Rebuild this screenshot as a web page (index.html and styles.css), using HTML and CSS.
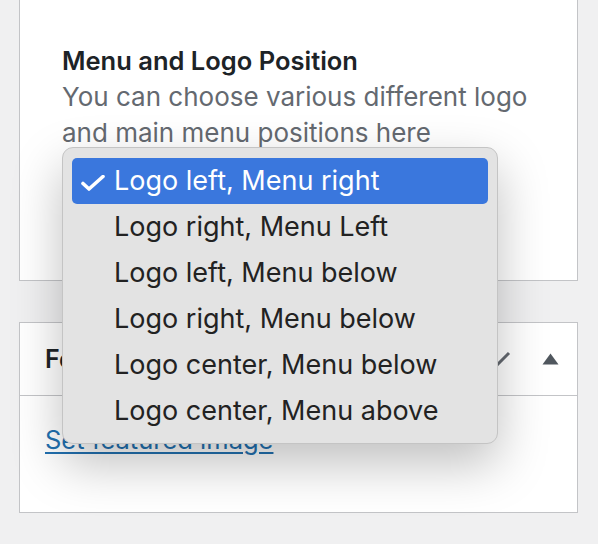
FILE: index.html
```html
<!DOCTYPE html>
<html lang="en">
<head>
	<meta charset="UTF-8">
	<title>Menu and Logo Position</title>
	<link rel="stylesheet" href="styles.css">
</head>
<body>
	<div class="panel panel-top">
		<div class="field">
			<h3 class="field-title">Menu and Logo Position</h3>
			<p class="field-desc">You can choose various different logo and main menu positions here</p>
			<div class="select-box"></div>
		</div>
	</div>

	<div class="panel panel-image">
		<div class="panel-head">
			<h2 class="panel-title">Featured image</h2>
			<div class="panel-actions">
				<span class="act">
					<svg width="28" height="16" viewBox="0 0 28 16"><path d="M2 14l12-12 12 12" fill="none" stroke="#646970" stroke-width="3"/></svg>
				</span>
				<span class="act">
					<svg width="28" height="16" viewBox="0 0 28 16"><path d="M2 2l12 12 12-12" fill="none" stroke="#646970" stroke-width="3"/></svg>
				</span>
				<span class="act">
					<svg width="17" height="12" viewBox="0 0 17 12"><path d="M8.5 0.5l8 11H.5z" fill="#50575e"/></svg>
				</span>
			</div>
		</div>
		<div class="panel-body">
			<a href="#" class="link">Set featured image</a>
		</div>
	</div>

	<!-- open select popup -->
	<ul class="popup">
		<li class="selected">
			<svg class="check" width="24" height="16" viewBox="0 0 24 16"><path d="M2 8.5l6 5.5 14-12.5" fill="none" stroke="#fff" stroke-width="3.6" stroke-linecap="round" stroke-linejoin="round"/></svg>
			Logo left, Menu right
		</li>
		<li>Logo right, Menu Left</li>
		<li>Logo left, Menu below</li>
		<li>Logo right, Menu below</li>
		<li>Logo center, Menu below</li>
		<li>Logo center, Menu above</li>
	</ul>
</body>
</html>
```

FILE: styles.css
```css
*{
	margin: 0;
	padding: 0;
	box-sizing: border-box;
}
ul{
	list-style-type: none;
}
body{
	background: #f0f0f1;
	font-family: Inter, "Noto Sans", sans-serif;
	color: #1d2327;
	position: relative;
	height: 544px;
	overflow: hidden;
}

.panel{
	background: #fff;
	border: 1px solid #c3c4c7;
	margin-left: 19px;
	width: 559px;
}
.panel-top{
	border-top: none;
	height: 281px;
	padding: 46px 0 0 42px;
}
.field-title{
	font-size: 25.5px;
	font-weight: 600;
	line-height: 30px;
	color: #1d2327;
}
.field-desc{
	font-size: 26px;
	line-height: 36px;
	color: #646970;
	width: 480px;
	margin-top: 3px;
}
.select-box{
	margin-top: 10px;
	width: 430px;
	height: 58px;
	border: 2px solid #2c5fa8;
	border-radius: 6px;
	background: #fff;
}

.panel-image{
	margin-top: 41px;
	height: 191px;
}
.panel-head{
	height: 73px;
	border-bottom: 1px solid #c3c4c7;
	display: flex;
	align-items: center;
	justify-content: space-between;
	padding: 0 18px 0 25px;
}
.panel-title{
	font-size: 25px;
	font-weight: 600;
}
.panel-actions{
	display: flex;
	gap: 31px;
	align-items: center;
}
.act svg{
	display: block;
}
.panel-body{
	padding: 28px 25px;
}
.link{
	color: #2271b1;
	font-size: 25.5px;
	text-decoration: underline;
	text-underline-offset: 3px;
}

.popup{
	position: absolute;
	left: 62px;
	top: 147px;
	width: 436px;
	height: 297px;
	background: #e3e3e3;
	border: 1px solid #c4c4c4;
	border-radius: 11px;
	padding: 10px 9px;
	box-shadow: 0 20px 50px rgba(0,0,0,0.25);
}
.popup li{
	height: 46px;
	line-height: 46px;
	font-size: 27px;
	color: #222;
	padding-left: 42px;
	border-radius: 5px;
	position: relative;
	white-space: nowrap;
}
.popup .selected{
	background: #3a77dd;
	color: #fff;
}
.check{
	position: absolute;
	left: 9px;
	top: 17px;
}
```
